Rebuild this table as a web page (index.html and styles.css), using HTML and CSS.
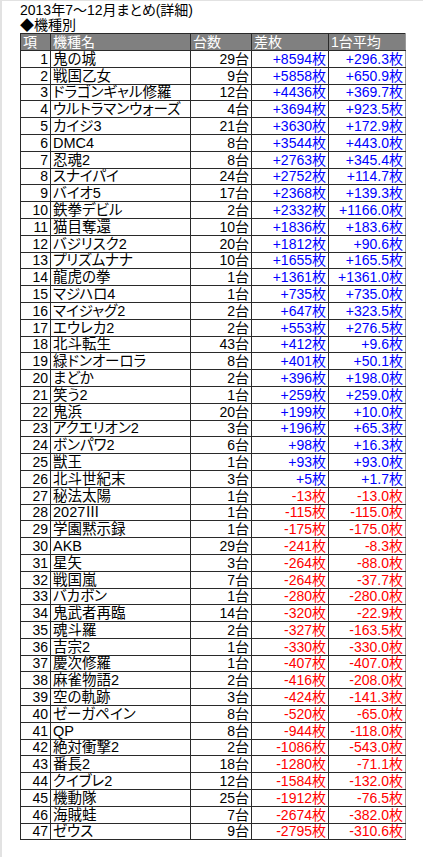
FILE: index.html
```html
<!DOCTYPE html>
<html lang="ja">
<head>
<meta charset="utf-8">
<title>2013年7～12月まとめ(詳細)</title>
<link rel="stylesheet" href="styles.css">
</head>
<body>
<div class="page">
  <div class="title">2013年7～12月まとめ(詳細)</div>
  <div class="subtitle">◆機種別</div>
  <table class="sheet">
    <colgroup>
      <col class="c-no"><col class="c-name"><col class="c-units"><col class="c-diff"><col class="c-avg">
    </colgroup>
    <thead>
      <tr><th>項</th><th>機種名</th><th>台数</th><th>差枚</th><th>1台平均</th></tr>
    </thead>
    <tbody>
      <tr><td class="num">1</td><td class="name">鬼の城</td><td class="num">29台</td><td class="num plus">+8594枚</td><td class="num plus">+296.3枚</td></tr>
      <tr><td class="num">2</td><td class="name">戦国乙女</td><td class="num">9台</td><td class="num plus">+5858枚</td><td class="num plus">+650.9枚</td></tr>
      <tr><td class="num">3</td><td class="name">ドラゴンギャル修羅</td><td class="num">12台</td><td class="num plus">+4436枚</td><td class="num plus">+369.7枚</td></tr>
      <tr><td class="num">4</td><td class="name">ウルトラマンウォーズ</td><td class="num">4台</td><td class="num plus">+3694枚</td><td class="num plus">+923.5枚</td></tr>
      <tr><td class="num">5</td><td class="name">カイジ3</td><td class="num">21台</td><td class="num plus">+3630枚</td><td class="num plus">+172.9枚</td></tr>
      <tr><td class="num">6</td><td class="name">DMC4</td><td class="num">8台</td><td class="num plus">+3544枚</td><td class="num plus">+443.0枚</td></tr>
      <tr><td class="num">7</td><td class="name">忍魂2</td><td class="num">8台</td><td class="num plus">+2763枚</td><td class="num plus">+345.4枚</td></tr>
      <tr><td class="num">8</td><td class="name">スナイパイ</td><td class="num">24台</td><td class="num plus">+2752枚</td><td class="num plus">+114.7枚</td></tr>
      <tr><td class="num">9</td><td class="name">バイオ5</td><td class="num">17台</td><td class="num plus">+2368枚</td><td class="num plus">+139.3枚</td></tr>
      <tr><td class="num">10</td><td class="name">鉄拳デビル</td><td class="num">2台</td><td class="num plus">+2332枚</td><td class="num plus">+1166.0枚</td></tr>
      <tr><td class="num">11</td><td class="name">猫目奪還</td><td class="num">10台</td><td class="num plus">+1836枚</td><td class="num plus">+183.6枚</td></tr>
      <tr><td class="num">12</td><td class="name">バジリスク2</td><td class="num">20台</td><td class="num plus">+1812枚</td><td class="num plus">+90.6枚</td></tr>
      <tr><td class="num">13</td><td class="name">プリズムナナ</td><td class="num">10台</td><td class="num plus">+1655枚</td><td class="num plus">+165.5枚</td></tr>
      <tr><td class="num">14</td><td class="name">龍虎の拳</td><td class="num">1台</td><td class="num plus">+1361枚</td><td class="num plus">+1361.0枚</td></tr>
      <tr><td class="num">15</td><td class="name">マジハロ4</td><td class="num">1台</td><td class="num plus">+735枚</td><td class="num plus">+735.0枚</td></tr>
      <tr><td class="num">16</td><td class="name">マイジャグ2</td><td class="num">2台</td><td class="num plus">+647枚</td><td class="num plus">+323.5枚</td></tr>
      <tr><td class="num">17</td><td class="name">エウレカ2</td><td class="num">2台</td><td class="num plus">+553枚</td><td class="num plus">+276.5枚</td></tr>
      <tr><td class="num">18</td><td class="name">北斗転生</td><td class="num">43台</td><td class="num plus">+412枚</td><td class="num plus">+9.6枚</td></tr>
      <tr><td class="num">19</td><td class="name">緑ドンオーロラ</td><td class="num">8台</td><td class="num plus">+401枚</td><td class="num plus">+50.1枚</td></tr>
      <tr><td class="num">20</td><td class="name">まどか</td><td class="num">2台</td><td class="num plus">+396枚</td><td class="num plus">+198.0枚</td></tr>
      <tr><td class="num">21</td><td class="name">笑う2</td><td class="num">1台</td><td class="num plus">+259枚</td><td class="num plus">+259.0枚</td></tr>
      <tr><td class="num">22</td><td class="name">鬼浜</td><td class="num">20台</td><td class="num plus">+199枚</td><td class="num plus">+10.0枚</td></tr>
      <tr><td class="num">23</td><td class="name">アクエリオン2</td><td class="num">3台</td><td class="num plus">+196枚</td><td class="num plus">+65.3枚</td></tr>
      <tr><td class="num">24</td><td class="name">ボンパワ2</td><td class="num">6台</td><td class="num plus">+98枚</td><td class="num plus">+16.3枚</td></tr>
      <tr><td class="num">25</td><td class="name">獣王</td><td class="num">1台</td><td class="num plus">+93枚</td><td class="num plus">+93.0枚</td></tr>
      <tr><td class="num">26</td><td class="name">北斗世紀末</td><td class="num">3台</td><td class="num plus">+5枚</td><td class="num plus">+1.7枚</td></tr>
      <tr><td class="num">27</td><td class="name">秘法太陽</td><td class="num">1台</td><td class="num minus">-13枚</td><td class="num minus">-13.0枚</td></tr>
      <tr><td class="num">28</td><td class="name">2027Ⅲ</td><td class="num">1台</td><td class="num minus">-115枚</td><td class="num minus">-115.0枚</td></tr>
      <tr><td class="num">29</td><td class="name">学園黙示録</td><td class="num">1台</td><td class="num minus">-175枚</td><td class="num minus">-175.0枚</td></tr>
      <tr><td class="num">30</td><td class="name">AKB</td><td class="num">29台</td><td class="num minus">-241枚</td><td class="num minus">-8.3枚</td></tr>
      <tr><td class="num">31</td><td class="name">星矢</td><td class="num">3台</td><td class="num minus">-264枚</td><td class="num minus">-88.0枚</td></tr>
      <tr><td class="num">32</td><td class="name">戦国嵐</td><td class="num">7台</td><td class="num minus">-264枚</td><td class="num minus">-37.7枚</td></tr>
      <tr><td class="num">33</td><td class="name">バカボン</td><td class="num">1台</td><td class="num minus">-280枚</td><td class="num minus">-280.0枚</td></tr>
      <tr><td class="num">34</td><td class="name">鬼武者再臨</td><td class="num">14台</td><td class="num minus">-320枚</td><td class="num minus">-22.9枚</td></tr>
      <tr><td class="num">35</td><td class="name">魂斗羅</td><td class="num">2台</td><td class="num minus">-327枚</td><td class="num minus">-163.5枚</td></tr>
      <tr><td class="num">36</td><td class="name">吉宗2</td><td class="num">1台</td><td class="num minus">-330枚</td><td class="num minus">-330.0枚</td></tr>
      <tr><td class="num">37</td><td class="name">慶次修羅</td><td class="num">1台</td><td class="num minus">-407枚</td><td class="num minus">-407.0枚</td></tr>
      <tr><td class="num">38</td><td class="name">麻雀物語2</td><td class="num">2台</td><td class="num minus">-416枚</td><td class="num minus">-208.0枚</td></tr>
      <tr><td class="num">39</td><td class="name">空の軌跡</td><td class="num">3台</td><td class="num minus">-424枚</td><td class="num minus">-141.3枚</td></tr>
      <tr><td class="num">40</td><td class="name">ゼーガペイン</td><td class="num">8台</td><td class="num minus">-520枚</td><td class="num minus">-65.0枚</td></tr>
      <tr><td class="num">41</td><td class="name">QP</td><td class="num">8台</td><td class="num minus">-944枚</td><td class="num minus">-118.0枚</td></tr>
      <tr><td class="num">42</td><td class="name">絶対衝撃2</td><td class="num">2台</td><td class="num minus">-1086枚</td><td class="num minus">-543.0枚</td></tr>
      <tr><td class="num">43</td><td class="name">番長2</td><td class="num">18台</td><td class="num minus">-1280枚</td><td class="num minus">-71.1枚</td></tr>
      <tr><td class="num">44</td><td class="name">クイブレ2</td><td class="num">12台</td><td class="num minus">-1584枚</td><td class="num minus">-132.0枚</td></tr>
      <tr><td class="num">45</td><td class="name">機動隊</td><td class="num">25台</td><td class="num minus">-1912枚</td><td class="num minus">-76.5枚</td></tr>
      <tr><td class="num">46</td><td class="name">海賊蛙</td><td class="num">7台</td><td class="num minus">-2674枚</td><td class="num minus">-382.0枚</td></tr>
      <tr><td class="num">47</td><td class="name">ゼウス</td><td class="num">9台</td><td class="num minus">-2795枚</td><td class="num minus">-310.6枚</td></tr>
    </tbody>
  </table>
</div>
</body>
</html>
```
FILE: styles.css
```css
html, body {
  margin: 0;
  padding: 0;
  background: #ffffff;
}
body {
  border-left: 2px solid #e2e2e2;
  border-top: 1px solid #e2e2e2;
  min-height: 857px;
  box-sizing: border-box;
  font-family: "Liberation Sans", "Noto Sans CJK JP", sans-serif;
  font-size: 14px;
  color: #000;
  font-feature-settings: "palt" 1;
}
.page {
  padding: 2px 0 0 18px;
}
.title,
.subtitle {
  height: 15px;
  line-height: 15px;
  white-space: nowrap;
}
.sheet {
  border-collapse: collapse;
  table-layout: fixed;
  width: 385px;
}
.c-no { width: 30px; }
.c-name { width: 140px; }
.c-units { width: 61px; }
.c-diff { width: 77px; }
.c-avg { width: 77px; }
.sheet th,
.sheet td {
  border: 1px solid #2a2a2a;
  padding: 0 2px;
  height: 16.8px;
  line-height: 15px;
  vertical-align: bottom;
  white-space: nowrap;
  overflow: hidden;
  box-sizing: border-box;
}
.sheet th {
  background: #808080;
  color: #ffffff;
  font-weight: normal;
  text-align: left;
  height: 17px;
}
.sheet td.name {
  font-size: 14.5px;
}
.sheet td.num {
  text-align: right;
}
.sheet th:last-child,
.sheet td:last-child {
  border-right-color: #9a9a9a;
}
.plus { color: #0000ff; }
.minus { color: #ff0000; }
```
